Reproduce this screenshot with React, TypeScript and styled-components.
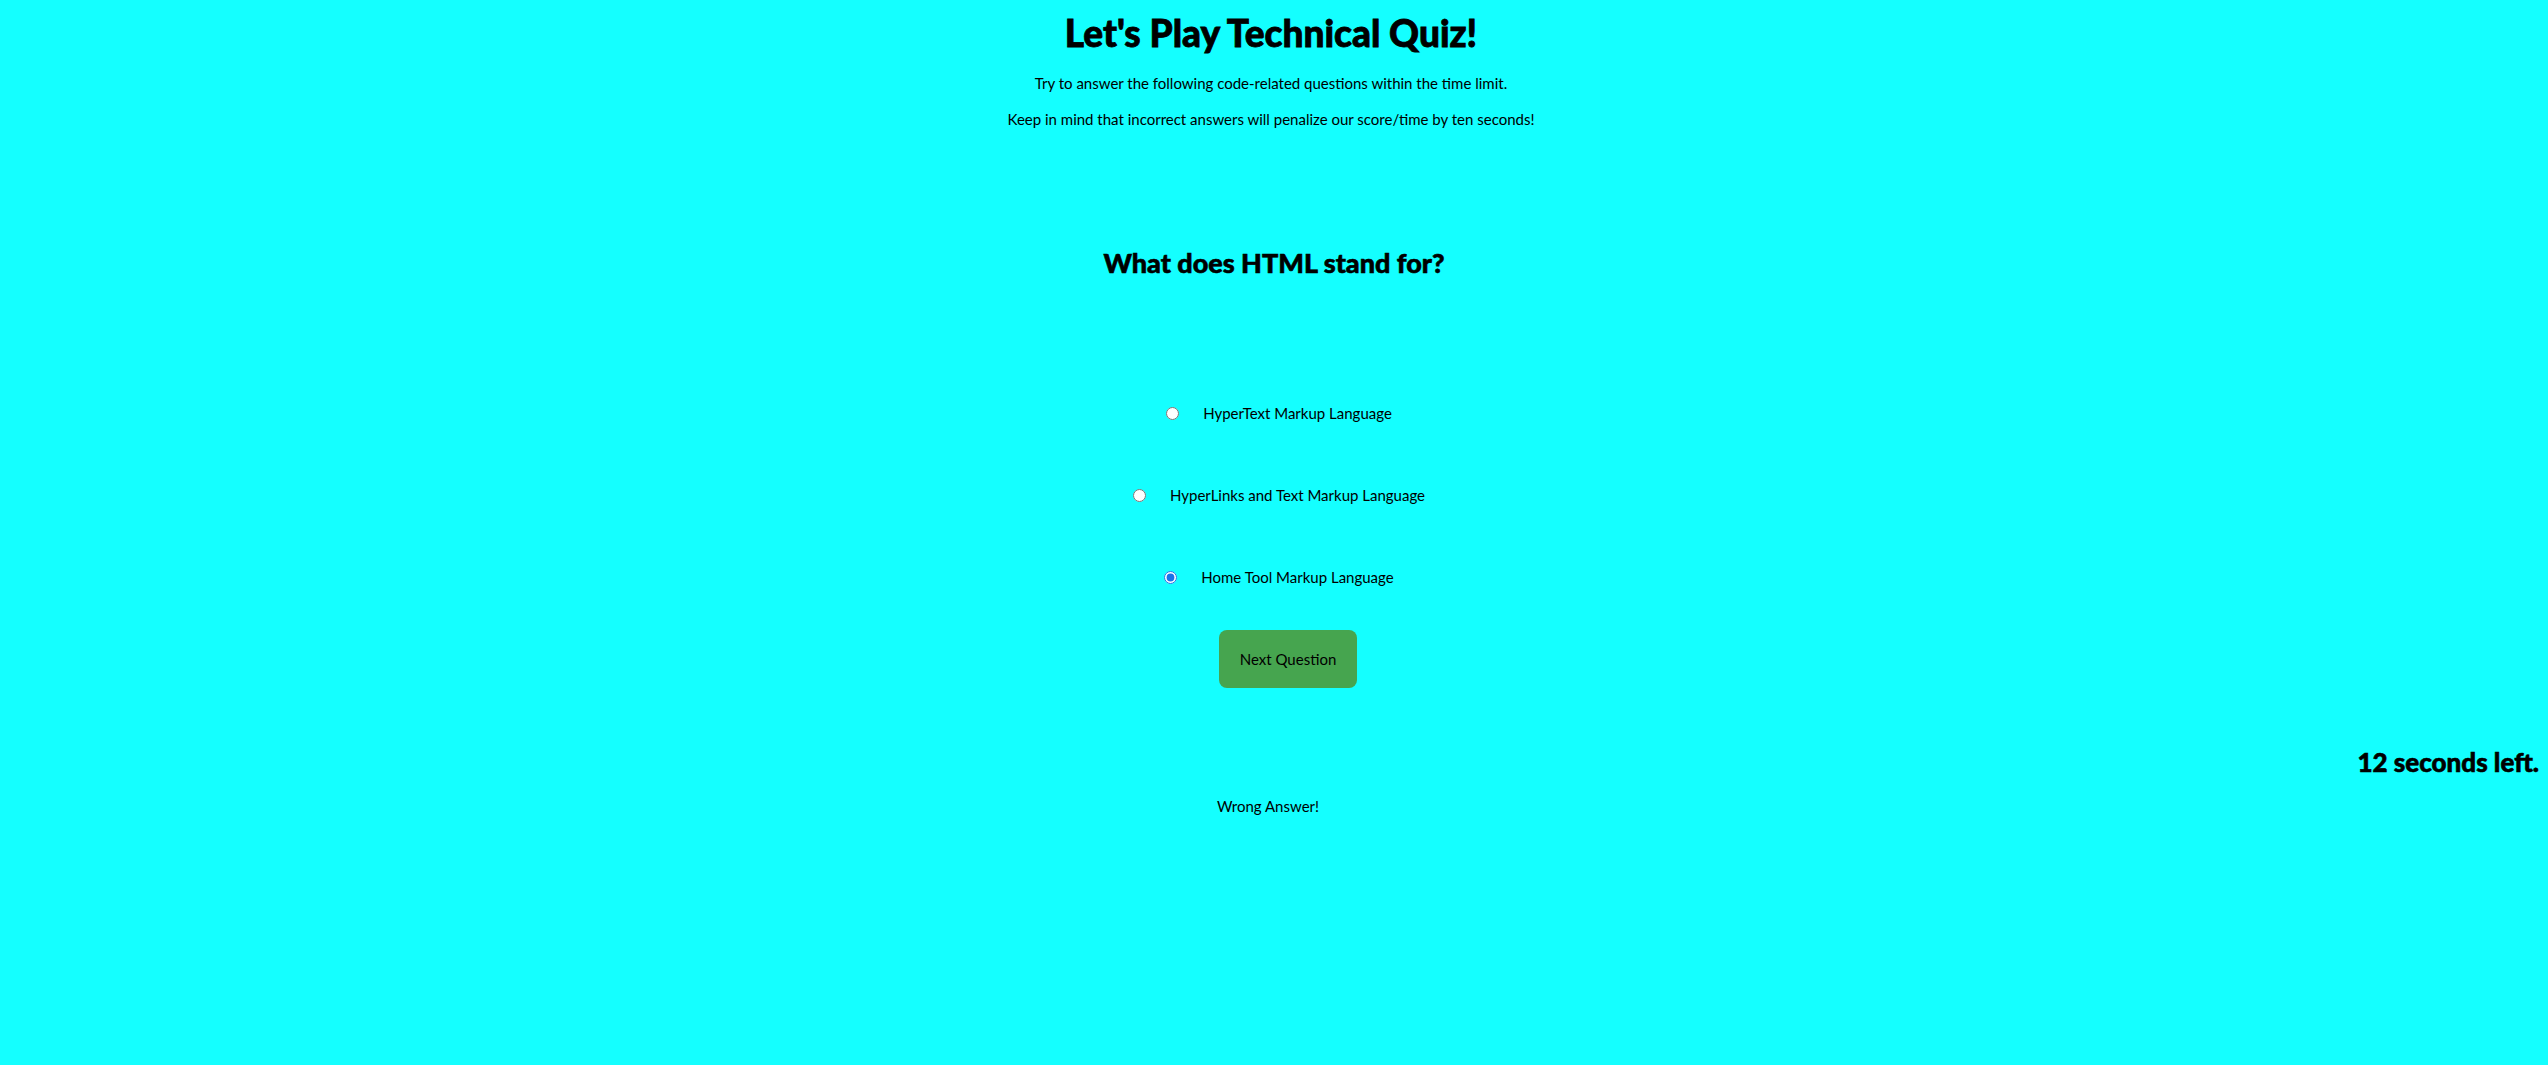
import React, { useState } from "react";
import styled, { createGlobalStyle } from "styled-components";

const GlobalStyle = createGlobalStyle`
  html, body {
    margin: 0;
    padding: 0;
    background: #14ffff;
  }
  body {
    font-family: Lato, "Open Sans", "Liberation Sans", sans-serif;
    color: #000;
  }
`;

const Page = styled.div`
  min-height: 1065px;
  background: #14ffff;
  padding: 0 9px;
  box-sizing: border-box;
  display: flex;
  flex-direction: column;
`;

const Header = styled.header`
  display: flex;
  flex-direction: column;
  align-items: center;
  text-align: center;
  padding-right: 6px;
`;

const Title = styled.h1`
  font-size: 37px;
  font-weight: 900;
  line-height: 40px;
  margin: 13px 0 0;
  -webkit-text-stroke: 0.8px #000;
`;

const Intro = styled.p<{ $first?: boolean }>`
  font-size: 15px;
  line-height: 20px;
  margin: ${(p) => (p.$first ? "20px 0 0" : "16px 0 0")};
`;

const Quiz = styled.section`
  display: flex;
  flex-direction: column;
  align-items: center;
`;

const Question = styled.h2`
  font-size: 27px;
  font-weight: 900;
  line-height: 30px;
  margin: 119px 0 0;
  -webkit-text-stroke: 0.6px #000;
`;

const Options = styled.div`
  display: flex;
  flex-direction: column;
  align-items: center;
  gap: 62px;
  margin-top: 125px;
  padding-left: 10px;
`;

const Option = styled.label`
  display: flex;
  align-items: center;
  gap: 24px;
  font-size: 15px;
  line-height: 20px;
  cursor: pointer;
`;

const Radio = styled.input`
  width: 13px;
  height: 13px;
  margin: 0;
  accent-color: #1a73e8;
`;

const NextButton = styled.button`
  margin-top: 43px;
  margin-left: 28px;
  width: 138px;
  height: 58px;
  border: none;
  border-radius: 8px;
  background: #46a54f;
  color: #000;
  font-family: inherit;
  font-size: 15px;
  cursor: pointer;
`;

const Timer = styled.h2`
  font-size: 26px;
  font-weight: 900;
  line-height: 30px;
  text-align: right;
  margin: 59px 0 0;
  -webkit-text-stroke: 0.6px #000;
`;

const Feedback = styled.p`
  font-size: 15px;
  line-height: 20px;
  text-align: center;
  margin: 19px 0 0;
  padding-right: 12px;
`;

const answers = [
  "HyperText Markup Language",
  "HyperLinks and Text Markup Language",
  "Home Tool Markup Language",
];

export default function App() {
  const [selected, setSelected] = useState(2);
  return (
    <>
      <GlobalStyle />
      <Page>
        <Header>
          <Title>Let's Play Technical Quiz!</Title>
          <Intro $first>Try to answer the following code-related questions within the time limit.</Intro>
          <Intro>Keep in mind that incorrect answers will penalize our score/time by ten seconds!</Intro>
        </Header>
        <Quiz>
          <Question>What does HTML stand for?</Question>
          <Options>
            {answers.map((a, i) => (
              <Option key={a}>
                <Radio
                  type="radio"
                  name="answer"
                  checked={selected === i}
                  onChange={() => setSelected(i)}
                />
                {a}
              </Option>
            ))}
          </Options>
          <NextButton>Next Question</NextButton>
        </Quiz>
        <Timer>12 seconds left.</Timer>
        <Feedback>Wrong Answer!</Feedback>
      </Page>
    </>
  );
}
